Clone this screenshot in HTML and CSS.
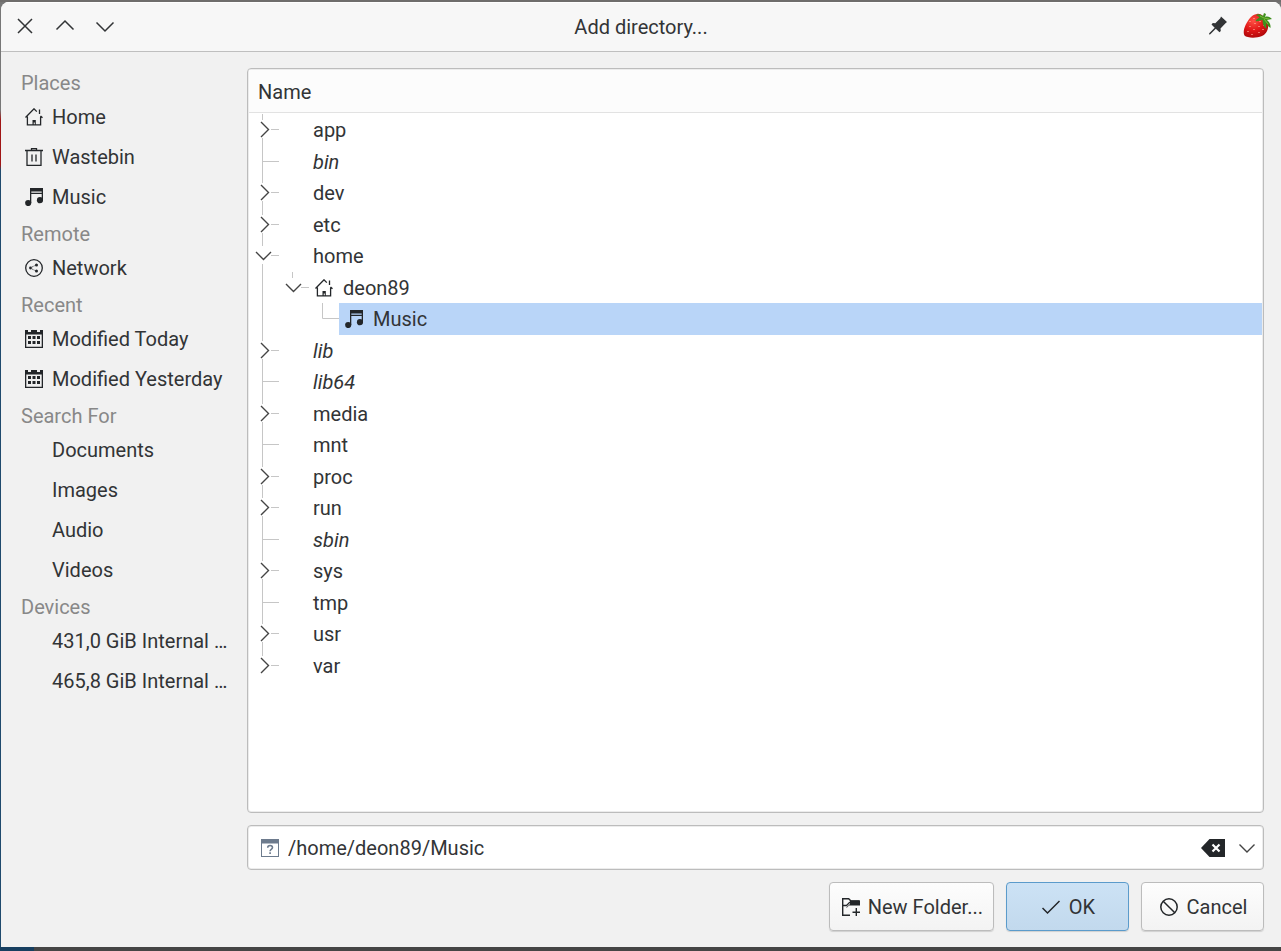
FILE: index.html
```html
<!DOCTYPE html>
<html lang="en">
<head>
<meta charset="utf-8">
<meta name="viewport" content="width=device-width, initial-scale=1">
<title>Add directory...</title>
<link rel="stylesheet" href="styles.css">
</head>
<body>
<svg class="defs" aria-hidden="true">
  <symbol id="home" viewBox="0 0 18 18"><path d="M0.500 9.500L9 .8l2.800 2.800M15.500 8l2 1.800M2.400 8.500v8.400h13.200V8.500M14.500 1.500V6" fill="none" stroke="currentColor" stroke-width="1.300"/><path d="M7.500 12h3.300v5H9.800v-2.500H8.700V17H7.500z" fill="currentColor"/></symbol>
  <symbol id="bin" viewBox="0 0 18 18"><path d="M0 2.500h18M6.500 2V.7h5V2M2 2.500v14.800h14V2.500M7 6.500v7M11 6.500v7" fill="none" stroke="currentColor" stroke-width="1.300"/></symbol>
  <symbol id="music" viewBox="0 0 18 18"><path d="M5 0h13v13h-1.300V6H6.300v9H5zM6.300 3.400v1.400h10.400V3.400z" fill="currentColor" fill-rule="evenodd"/><circle cx="3.200" cy="15" r="3.100" fill="currentColor"/><circle cx="15" cy="12.200" r="3.100" fill="currentColor"/></symbol>
  <symbol id="network" viewBox="0 0 18 18"><circle cx="9" cy="9" r="8.300" fill="none" stroke="currentColor" stroke-width="1.300"/><path d="M5 9l6-3M5 9l6 3" stroke="currentColor" stroke-width="1" stroke-dasharray="1 1"/><circle cx="5.500" cy="9" r="1.400" fill="currentColor"/><circle cx="11.500" cy="6" r="1.500" fill="currentColor"/><circle cx="11.500" cy="12" r="1.500" fill="currentColor"/></symbol>
  <symbol id="calendar" viewBox="0 0 18 18"><path d="M0 0h3v2h3V0h6v2h3V0h3v18H0zM1.300 4.500v12.200h15.400V4.500z" fill="currentColor" fill-rule="evenodd"/><path d="M3 6h3v3H3zM7.500 6h3v3h-3zM12 6h3v3h-3zM3 11h3v3H3zM7.500 11h3v3h-3zM12 11h3v3h-3z" fill="currentColor"/></symbol>
  <symbol id="t-closed" viewBox="0 0 30 32"><path d="M13.500 0v6M13.500 24v8M22 15.500h8" stroke="#c6c6c6" fill="none"/><path d="M12 8l7.500 7.500L12 23" stroke="#444" stroke-width="1.400" fill="none"/></symbol>
  <symbol id="t-last" viewBox="0 0 30 32"><path d="M13.500 0v6M22 15.500h8" stroke="#c6c6c6" fill="none"/><path d="M12 8l7.500 7.500L12 23" stroke="#444" stroke-width="1.400" fill="none"/></symbol>
  <symbol id="t-open" viewBox="0 0 30 32"><path d="M13.500 0v6M13.500 24v8M22 15.500h8" stroke="#c6c6c6" fill="none"/><path d="M7 12l7.500 7.500L22 12" stroke="#444" stroke-width="1.400" fill="none"/></symbol>
  <symbol id="t-openlast" viewBox="0 0 30 32"><path d="M13.500 0v6M22 15.500h8" stroke="#c6c6c6" fill="none"/><path d="M7 12l7.500 7.500L22 12" stroke="#444" stroke-width="1.400" fill="none"/></symbol>
  <symbol id="t-leaf" viewBox="0 0 30 32"><path d="M13.500 0v32M14 15.500h16" stroke="#c6c6c6" fill="none"/></symbol>
  <symbol id="t-elbow" viewBox="0 0 30 32"><path d="M13.500 0v15.500H30" stroke="#c6c6c6" fill="none"/></symbol>
  <symbol id="t-line" viewBox="0 0 30 32"><path d="M13.500 0v32" stroke="#c6c6c6" fill="none"/></symbol>
</svg>

<div class="window" role="dialog" aria-labelledby="title">
  <header class="titlebar">
    <div class="group left">
      <button class="tool" aria-label="Close"><svg viewBox="0 0 20 20"><path d="M3 3l14 14M17 3L3 17" fill="none" stroke="currentColor" stroke-width="1.500"/></svg></button>
      <button class="tool" aria-label="Maximize"><svg viewBox="0 0 20 20"><path d="M1.500 13.500L10 5l8.500 8.500" fill="none" stroke="currentColor" stroke-width="1.500"/></svg></button>
      <button class="tool" aria-label="Minimize"><svg viewBox="0 0 20 20"><path d="M1.500 6.500L10 15l8.500-8.500" fill="none" stroke="currentColor" stroke-width="1.500"/></svg></button>
    </div>
    <h1 id="title">Add directory...</h1>
    <div class="group right">
      <button class="tool" aria-label="Pin"><svg viewBox="0 0 20 20"><path d="M13 0.500L19 6l-1.500 1.200-5 5.300.3 2.500-1.300 1.300-3.700-3.600L2.300 18.300 1 18.500l.2-1.300 5.500-5.500L3.500 8.500 4.800 7l2.500.3 5-5z" fill="currentColor"/></svg></button>
      <svg class="berry" viewBox="0 0 30 28" aria-hidden="true">
        <defs><radialGradient id="red" cx=".4" cy=".3" r=".8"><stop offset="0" stop-color="#ff5145"/><stop offset=".5" stop-color="#e01717"/><stop offset="1" stop-color="#a40508"/></radialGradient></defs>
        <path d="M14 2C18 1 23 6 25 11c1 5-1 11-6 13-6 2.500-15 2-17.500-.5C-1 19 3 11 7 6c2-2.500 4-3.500 7-4z" fill="url(#red)"/>
        <path d="M7 9v1M11 6v1M12 11v1M7 14v1M16 14v1M11 17v1M5 19v1M16 20v1M20 17v1M9 22v1M17 9v1M21 13v1" stroke="#ffb09a" stroke-width="1.200"/>
        <path d="M13 3c2-1.500 5-1 7 1l1-3 2 1-1 3c3-1 5 0 7 2l-5 1c2 2 4 4 3.500 8-2-1-3-3-4.500-5l.5 6c-3-2-4-5-4-9-3 0-4 2-7 1 1-2 3-3 4-3.500C15 4 14 4 13 3z" fill="#3f8f1d"/>
        <path d="M17 4l4 2 5 1M21 7l4 5" stroke="#8bc53f" stroke-width=".8" fill="none"/>
      </svg>
    </div>
  </header>

  <main class="content">
    <nav class="places" aria-label="Places">
      <h2>Places</h2>
      <a href="#"><svg class="icon"><use href="#home"/></svg>Home</a>
      <a href="#"><svg class="icon"><use href="#bin"/></svg>Wastebin</a>
      <a href="#"><svg class="icon"><use href="#music"/></svg>Music</a>
      <h2>Remote</h2>
      <a href="#"><svg class="icon"><use href="#network"/></svg>Network</a>
      <h2>Recent</h2>
      <a href="#"><svg class="icon"><use href="#calendar"/></svg>Modified Today</a>
      <a href="#"><svg class="icon"><use href="#calendar"/></svg>Modified Yesterday</a>
      <h2>Search For</h2>
      <a href="#"><span class="icon"></span>Documents</a>
      <a href="#"><span class="icon"></span>Images</a>
      <a href="#"><span class="icon"></span>Audio</a>
      <a href="#"><span class="icon"></span>Videos</a>
      <h2>Devices</h2>
      <a href="#"><span class="icon"></span>431,0 GiB Internal …</a>
      <a href="#"><span class="icon"></span>465,8 GiB Internal …</a>
    </nav>

    <div class="chooser">
      <section class="panel">
        <button class="column">Name</button>
        <ul class="tree" role="tree" aria-label="Name">
          <li role="treeitem"><svg class="branch"><use href="#t-closed"/></svg><span class="entry"><span class="icon"></span>app</span></li>
          <li role="treeitem"><svg class="branch"><use href="#t-leaf"/></svg><span class="entry link"><span class="icon"></span>bin</span></li>
          <li role="treeitem"><svg class="branch"><use href="#t-closed"/></svg><span class="entry"><span class="icon"></span>dev</span></li>
          <li role="treeitem"><svg class="branch"><use href="#t-closed"/></svg><span class="entry"><span class="icon"></span>etc</span></li>
          <li role="treeitem" aria-expanded="true"><svg class="branch"><use href="#t-open"/></svg><span class="entry"><span class="icon"></span>home</span></li>
          <li role="treeitem" aria-expanded="true" aria-level="2"><svg class="branch"><use href="#t-line"/></svg><svg class="branch"><use href="#t-openlast"/></svg><span class="entry"><svg class="icon"><use href="#home"/></svg>deon89</span></li>
          <li role="treeitem" aria-selected="true" aria-level="3"><svg class="branch"><use href="#t-line"/></svg><span class="branch"></span><svg class="branch"><use href="#t-elbow"/></svg><span class="entry selected"><svg class="icon"><use href="#music"/></svg>Music</span></li>
          <li role="treeitem"><svg class="branch"><use href="#t-closed"/></svg><span class="entry link"><span class="icon"></span>lib</span></li>
          <li role="treeitem"><svg class="branch"><use href="#t-leaf"/></svg><span class="entry link"><span class="icon"></span>lib64</span></li>
          <li role="treeitem"><svg class="branch"><use href="#t-closed"/></svg><span class="entry"><span class="icon"></span>media</span></li>
          <li role="treeitem"><svg class="branch"><use href="#t-leaf"/></svg><span class="entry"><span class="icon"></span>mnt</span></li>
          <li role="treeitem"><svg class="branch"><use href="#t-closed"/></svg><span class="entry"><span class="icon"></span>proc</span></li>
          <li role="treeitem"><svg class="branch"><use href="#t-closed"/></svg><span class="entry"><span class="icon"></span>run</span></li>
          <li role="treeitem"><svg class="branch"><use href="#t-leaf"/></svg><span class="entry link"><span class="icon"></span>sbin</span></li>
          <li role="treeitem"><svg class="branch"><use href="#t-closed"/></svg><span class="entry"><span class="icon"></span>sys</span></li>
          <li role="treeitem"><svg class="branch"><use href="#t-leaf"/></svg><span class="entry"><span class="icon"></span>tmp</span></li>
          <li role="treeitem"><svg class="branch"><use href="#t-closed"/></svg><span class="entry"><span class="icon"></span>usr</span></li>
          <li role="treeitem"><svg class="branch"><use href="#t-last"/></svg><span class="entry"><span class="icon"></span>var</span></li>
        </ul>
      </section>

      <div class="path">
        <svg class="icon" viewBox="0 0 18 18" aria-hidden="true"><path d="M0 0h18v18H0zM1 4.500V17h16V4.500z" fill="#6d7b8d" fill-rule="evenodd"/><path d="M6.700 8.800c0-3 4.800-3 4.800-.3 0 2-2.400 1.800-2.400 3.700M9.100 13.300v1.700" fill="none" stroke="#6d7b8d" stroke-width="1.600"/></svg>
        <input type="text" value="/home/deon89/Music" aria-label="Directory path">
        <button class="clear" aria-label="Clear"><svg viewBox="0 0 24 18"><path d="M0 9l8.500-9H24v18H8.500z" fill="currentColor"/><path d="M11.500 5.500l7 7M18.500 5.500l-7 7" stroke="#fff" stroke-width="2.200"/></svg></button>
        <button class="drop" aria-label="Show history"><svg viewBox="0 0 16 16"><path d="M.5 4.500L8 12l7.500-7.500" fill="none" stroke="#444" stroke-width="1.400"/></svg></button>
      </div>

      <footer class="actions">
        <button class="btn snug"><svg class="icon" viewBox="0 0 18 18" aria-hidden="true"><path d="M8 17.300H.7V.7h6L9 3h8.500" fill="none" stroke="currentColor" stroke-width="1.400"/><path d="M8 2.500h10v5H7L5 9.500H4L8 6z" fill="currentColor"/><path d="M1 7.500h3.500L8 4" fill="none" stroke="currentColor" stroke-width="1.300"/><path d="M14.300 10v8M10.500 14.300H18" stroke="currentColor" stroke-width="1.400"/></svg>New Folder...</button>
        <button class="btn primary"><svg class="icon" viewBox="0 0 18 18" aria-hidden="true"><path d="M.5 10l5 5L17.500 3" fill="none" stroke="currentColor" stroke-width="1.500"/></svg>OK</button>
        <button class="btn"><svg class="icon" viewBox="0 0 18 18" aria-hidden="true"><circle cx="9" cy="9" r="8.200" fill="none" stroke="currentColor" stroke-width="1.500"/><path d="M3.200 3.200l11.600 11.600" stroke="currentColor" stroke-width="1.500"/></svg>Cancel</button>
      </footer>
    </div>
  </main>
</div>
</body>
</html>
```
FILE: styles.css
```css
* { box-sizing: border-box; }

body {
  margin: 0;
  height: 100vh;
  padding: 2px 0 4px 1px;
  display: flex;
  background:
    linear-gradient(#173f60, #173f60) 0 100% / 34px 4px no-repeat,
    linear-gradient(#454545, #454545) 0 100% / 100% 4px no-repeat,
    linear-gradient(#6f6d6c, #6f6d6c) 0 0 / 100% 2px no-repeat,
    linear-gradient(#777 0 110px, #a01515 120px 165px, #1f4a6d 170px 100%);
  color: #323436;
  font: 20px/24px Roboto, "Noto Sans", sans-serif;
}

button, input {
  font: inherit;
  color: inherit;
  border: 0;
  padding: 0;
  background: none;
}

.defs { position: absolute; width: 0; height: 0; }
.icon { width: 18px; height: 18px; flex: none; color: #232629; }

.window {
  flex: 1;
  min-width: 0;
  display: flex;
  flex-direction: column;
  background: #f1f1f1;
  border-radius: 8px 8px 0 0;
  overflow: hidden;
}

.titlebar {
  display: grid;
  grid-template-columns: 1fr auto 1fr;
  align-items: center;
  height: 50px;
  padding: 0 8px;
  background: #f7f7f7;
  border-bottom: 1px solid #bfbfbf;
  border-top: 1px solid #fff;
}
.titlebar h1 { margin: 0; font-size: 20px; font-weight: 400; }
.group { display: flex; align-items: center; gap: 20px; padding-bottom: 2px; }
.group.left { padding-left: 6px; }
.group.right { justify-content: flex-end; gap: 15px; }
.tool { width: 20px; height: 20px; }
.tool svg { display: block; width: 20px; height: 20px; }
.berry { width: 30px; height: 28px; }

.content { flex: 1; min-height: 0; display: flex; }

.places {
  width: 246px;
  flex: none;
  padding: 17px 0 0 20px;
}
.places h2 {
  margin: 3px 0 0;
  font-size: 20px;
  font-weight: 400;
  line-height: 28px;
  color: #888;
}
.places h2:first-child { margin-top: 0; }
.places a {
  display: flex;
  align-items: center;
  gap: 9px;
  height: 40px;
  padding-left: 4px;
  color: inherit;
  text-decoration: none;
  white-space: nowrap;
}

.chooser {
  flex: 1;
  min-width: 0;
  display: flex;
  flex-direction: column;
  gap: 12px;
  padding: 16px 17px 16px 0;
}
.panel, .path {
  border: 1px solid #bcbcbc;
  border-radius: 4px;
  background: #fff;
  box-shadow: inset 0 0 0 1px #ececec;
}
.panel {
  flex: 1;
  min-height: 0;
  overflow: hidden;
  padding: 1px;
}
.column {
  display: block;
  width: 100%;
  height: 43px;
  padding: 1px 9px 0;
  text-align: left;
  background: #fcfcfc;
  border-bottom: 1px solid #e2e2e2;
}

.tree { list-style: none; margin: 0; padding: 1px 0 0; }
.tree li { display: flex; height: 31px; }
.tree li:nth-child(odd) { height: 32px; }
.branch { width: 30px; height: 32px; flex: none; }
.entry {
  flex: 1;
  display: flex;
  align-items: center;
  gap: 10px;
  padding-left: 6px;
}
.link { font-style: italic; }
.selected { background: #b9d5f8; }

.path {
  display: flex;
  align-items: center;
  height: 45px;
  padding: 0 8px 0 13px;
}
.path input { flex: 1; min-width: 0; margin: 0 9px; outline: 0; }
.clear { width: 24px; height: 18px; margin-right: 14px; color: #232629; }
.drop { width: 16px; height: 16px; }
.clear svg, .drop svg { display: block; }

.actions { display: flex; justify-content: flex-end; gap: 12px; }
.btn {
  display: flex;
  align-items: center;
  justify-content: center;
  gap: 9px;
  min-width: 123px;
  height: 49px;
  padding: 0 10px 0 12px;
  border: 1px solid #bcbcbc;
  border-radius: 4px;
  background: linear-gradient(#fdfdfd, #f3f3f3);
  box-shadow: 0 1px 1px #d0d0d0;
}
.snug { gap: 8px; }
.primary {
  border-color: #5b9bcb;
  background: linear-gradient(#cce2f5, #c2d9ed);
}
```
